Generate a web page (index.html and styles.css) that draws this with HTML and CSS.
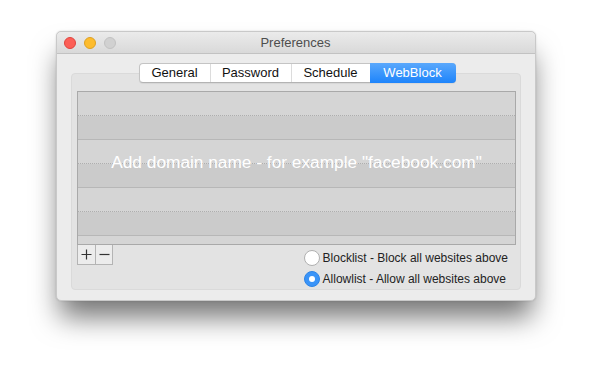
FILE: index.html
```html
<!DOCTYPE html>
<html lang="en">
<head>
    <meta charset="UTF-8">
    <title>Preferences</title>
    <link rel="stylesheet" href="styles.css">
</head>
<body>
    <div class="window">
        <div class="titlebar">
            <div class="lights">
                <span class="light red"></span>
                <span class="light yellow"></span>
                <span class="light grey"></span>
            </div>
            <div class="title">Preferences</div>
        </div>

        <div class="content">
            <div class="tabs">
                <div class="tab">General</div>
                <div class="tab">Password</div>
                <div class="tab">Schedule</div>
                <div class="tab active">WebBlock</div>
            </div>

            <div class="panel">
                <div class="table">
                    <div class="row stripe-a dotted"></div>
                    <div class="row stripe-b solid"></div>
                    <div class="row stripe-a dotted"></div>
                    <div class="row stripe-b solid"></div>
                    <div class="row stripe-a dotted"></div>
                    <div class="row stripe-b solid"></div>
                    <div class="row stripe-a last"></div>
                    <!-- подсказка поверх строк -->
                    <div class="placeholder">Add domain name - for example "facebook.com"</div>
                </div>

                <div class="bottom">
                    <div class="buttons">
                        <div class="btn">
                            <svg width="11" height="11" viewBox="0 0 11 11"><path d="M5.5 0.5v10M0.5 5.5h10" stroke="#333" stroke-width="1.2"/></svg>
                        </div>
                        <div class="btn">
                            <svg width="11" height="11" viewBox="0 0 11 11"><path d="M0.5 5.5h10" stroke="#333" stroke-width="1.2"/></svg>
                        </div>
                    </div>

                    <div class="options">
                        <label class="option"><span class="radio"></span>Blocklist - Block all websites above</label>
                        <label class="option"><span class="radio checked"></span>Allowlist - Allow all websites above</label>
                    </div>
                </div>
            </div>
        </div>
    </div>
</body>
</html>
```

FILE: styles.css
```css
* {
    margin: 0;
    padding: 0;
    box-sizing: border-box;
}

body {
    font-family: 'Liberation Sans', Arial, sans-serif;
    background: #ffffff;
    width: 592px;
    height: 382px;
    padding: 31px 0 0 56px;
    overflow: hidden;
}

.window {
    width: 480px;
    height: 270px;
    background: #ececec;
    border: 1px solid #c9c9c9;
    border-radius: 5px;
    box-shadow: 0 20px 28px -4px rgba(0, 0, 0, 0.55), 0 0 2px rgba(0, 0, 0, 0.15);
    display: flex;
    flex-direction: column;
}

.titlebar {
    height: 22px;
    background: linear-gradient(#ebebeb, #d9d9d9);
    border-bottom: 1px solid #c2c2c2;
    border-radius: 5px 5px 0 0;
    display: flex;
    align-items: center;
}

.lights {
    display: flex;
    gap: 8px;
    padding-left: 7px;
}

.light {
    width: 12px;
    height: 12px;
    border-radius: 50%;
}

.red {
    background: #fc5f57;
    border: 1px solid #e0443e;
}

.yellow {
    background: #fdbc2e;
    border: 1px solid #dea123;
}

.grey {
    background: #d1d1d1;
    border: 1px solid #c2c2c2;
}

.title {
    flex: 1;
    text-align: center;
    font-size: 13px;
    color: #4d4d4d;
    margin-left: -60px;
}

.content {
    flex: 1;
    padding: 9px 14px 10px 14px;
    display: flex;
    flex-direction: column;
    align-items: center;
}

.tabs {
    display: flex;
    height: 20px;
    background: #ffffff;
    border: 1px solid #c4c4c4;
    border-bottom-color: #b3b3b3;
    border-radius: 4px;
    margin-bottom: -10px;
    margin-left: 2px;
    position: relative;
    z-index: 1;
    box-shadow: 0 1px 1px rgba(0, 0, 0, 0.06);
}

.tab {
    font-size: 13px;
    color: #111;
    line-height: 18px;
    text-align: center;
    border-left: 1px solid #dcdcdc;
}

.tab:nth-child(1) {
    width: 70px;
    border-left: none;
}

.tab:nth-child(2) {
    width: 81px;
}

.tab:nth-child(3) {
    width: 79px;
}

.tab.active {
    width: 86px;
    margin: -1px -1px -1px 0;
    line-height: 20px;
    border-left: none;
    color: #ffffff;
    background: linear-gradient(#5aa8fc, #1d84fb);
    border-radius: 0 4px 4px 0;
}

.panel {
    width: 100%;
    flex: 1;
    background: #e3e3e3;
    border: 1px solid #dadada;
    border-radius: 4px;
    padding: 17px 4px 0 5px;
}

.table {
    position: relative;
    height: 154px;
    border: 1px solid #a9a9a9;
    display: flex;
    flex-direction: column;
}

.row {
    height: 24px;
    flex-shrink: 0;
}

.stripe-a {
    background: #d5d5d5;
}

.stripe-b {
    background: #cbcbcb;
}

.dotted {
    border-bottom: 1px dotted #aeaeae;
}

.solid {
    border-bottom: 1px solid #b7b7b7;
}

.row.last {
    flex: 1;
    height: auto;
}

.placeholder {
    position: absolute;
    top: 61px;
    left: 0;
    right: 0;
    text-align: center;
    font-size: 17.3px;
    line-height: 18px;
    color: #ffffff;
}

.bottom {
    display: flex;
    justify-content: space-between;
    align-items: flex-start;
}

.buttons {
    display: flex;
    border: 1px solid #b4b4b4;
    border-top: none;
    background: #ececec;
}

.btn {
    width: 17px;
    height: 19px;
    display: flex;
    align-items: center;
    justify-content: center;
}

.btn + .btn {
    border-left: 1px solid #b4b4b4;
}

.options {
    display: flex;
    flex-direction: column;
    gap: 5px;
    padding-top: 5px;
    padding-right: 8px;
}

.option {
    display: flex;
    align-items: center;
    font-size: 12px;
    color: #222;
    height: 16px;
}

.radio {
    width: 16px;
    height: 16px;
    border-radius: 50%;
    background: #ffffff;
    border: 1px solid #b0b0b0;
    margin-right: 3px;
    position: relative;
}

.radio.checked {
    background: #3a94f8;
    border-color: #2d84e6;
}

.radio.checked::after {
    content: "";
    position: absolute;
    top: 4px;
    left: 4px;
    width: 6px;
    height: 6px;
    border-radius: 50%;
    background: #ffffff;
}
```
